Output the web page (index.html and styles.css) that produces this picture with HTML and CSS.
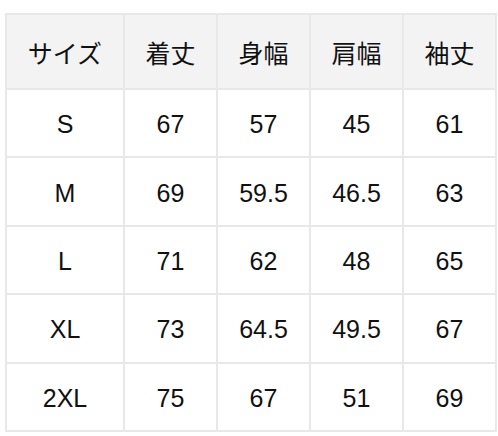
FILE: index.html
```html
<!DOCTYPE html>
<html lang="ja">
<head>
<meta charset="utf-8">
<link rel="stylesheet" href="styles.css">
</head>
<body>
<table class="size-table">
  <colgroup>
    <col class="col-first">
    <col class="col">
    <col class="col">
    <col class="col">
    <col class="col">
  </colgroup>
  <thead>
    <tr class="head-row">
      <th>サイズ</th><th>着丈</th><th>身幅</th><th>肩幅</th><th>袖丈</th>
    </tr>
  </thead>
  <tbody>
    <tr><td>S</td><td>67</td><td>57</td><td>45</td><td>61</td></tr>
    <tr><td>M</td><td>69</td><td>59.5</td><td>46.5</td><td>63</td></tr>
    <tr><td>L</td><td>71</td><td>62</td><td>48</td><td>65</td></tr>
    <tr><td>XL</td><td>73</td><td>64.5</td><td>49.5</td><td>67</td></tr>
    <tr><td>2XL</td><td>75</td><td>67</td><td>51</td><td>69</td></tr>
  </tbody>
</table>
</body>
</html>
```

FILE: styles.css
```css
html, body {
  margin: 0;
  padding: 0;
  background: #ffffff;
}

body {
  padding: 13px 0 0 5px;
  font-family: "Liberation Sans", "Noto Sans CJK JP", sans-serif;
  color: #111111;
}

.size-table {
  border-collapse: separate;
  border-spacing: 0;
  table-layout: fixed;
  width: 492px;
  border-top: 2px solid #e8e8e8;
  border-left: 2px solid #e8e8e8;
}

.col-first {
  width: 118px;
}

.col {
  width: 93px;
}

.size-table th,
.size-table td {
  border-right: 2px solid #e8e8e8;
  border-bottom: 2px solid #e8e8e8;
  text-align: center;
  vertical-align: middle;
  padding: 0;
  font-size: 25px;
  font-weight: normal;
  box-sizing: border-box;
}

.size-table th {
  background: #f3f3f3;
  height: 75px;
}

.size-table td {
  height: 68.4px;
  padding-top: 3px;
}
```
